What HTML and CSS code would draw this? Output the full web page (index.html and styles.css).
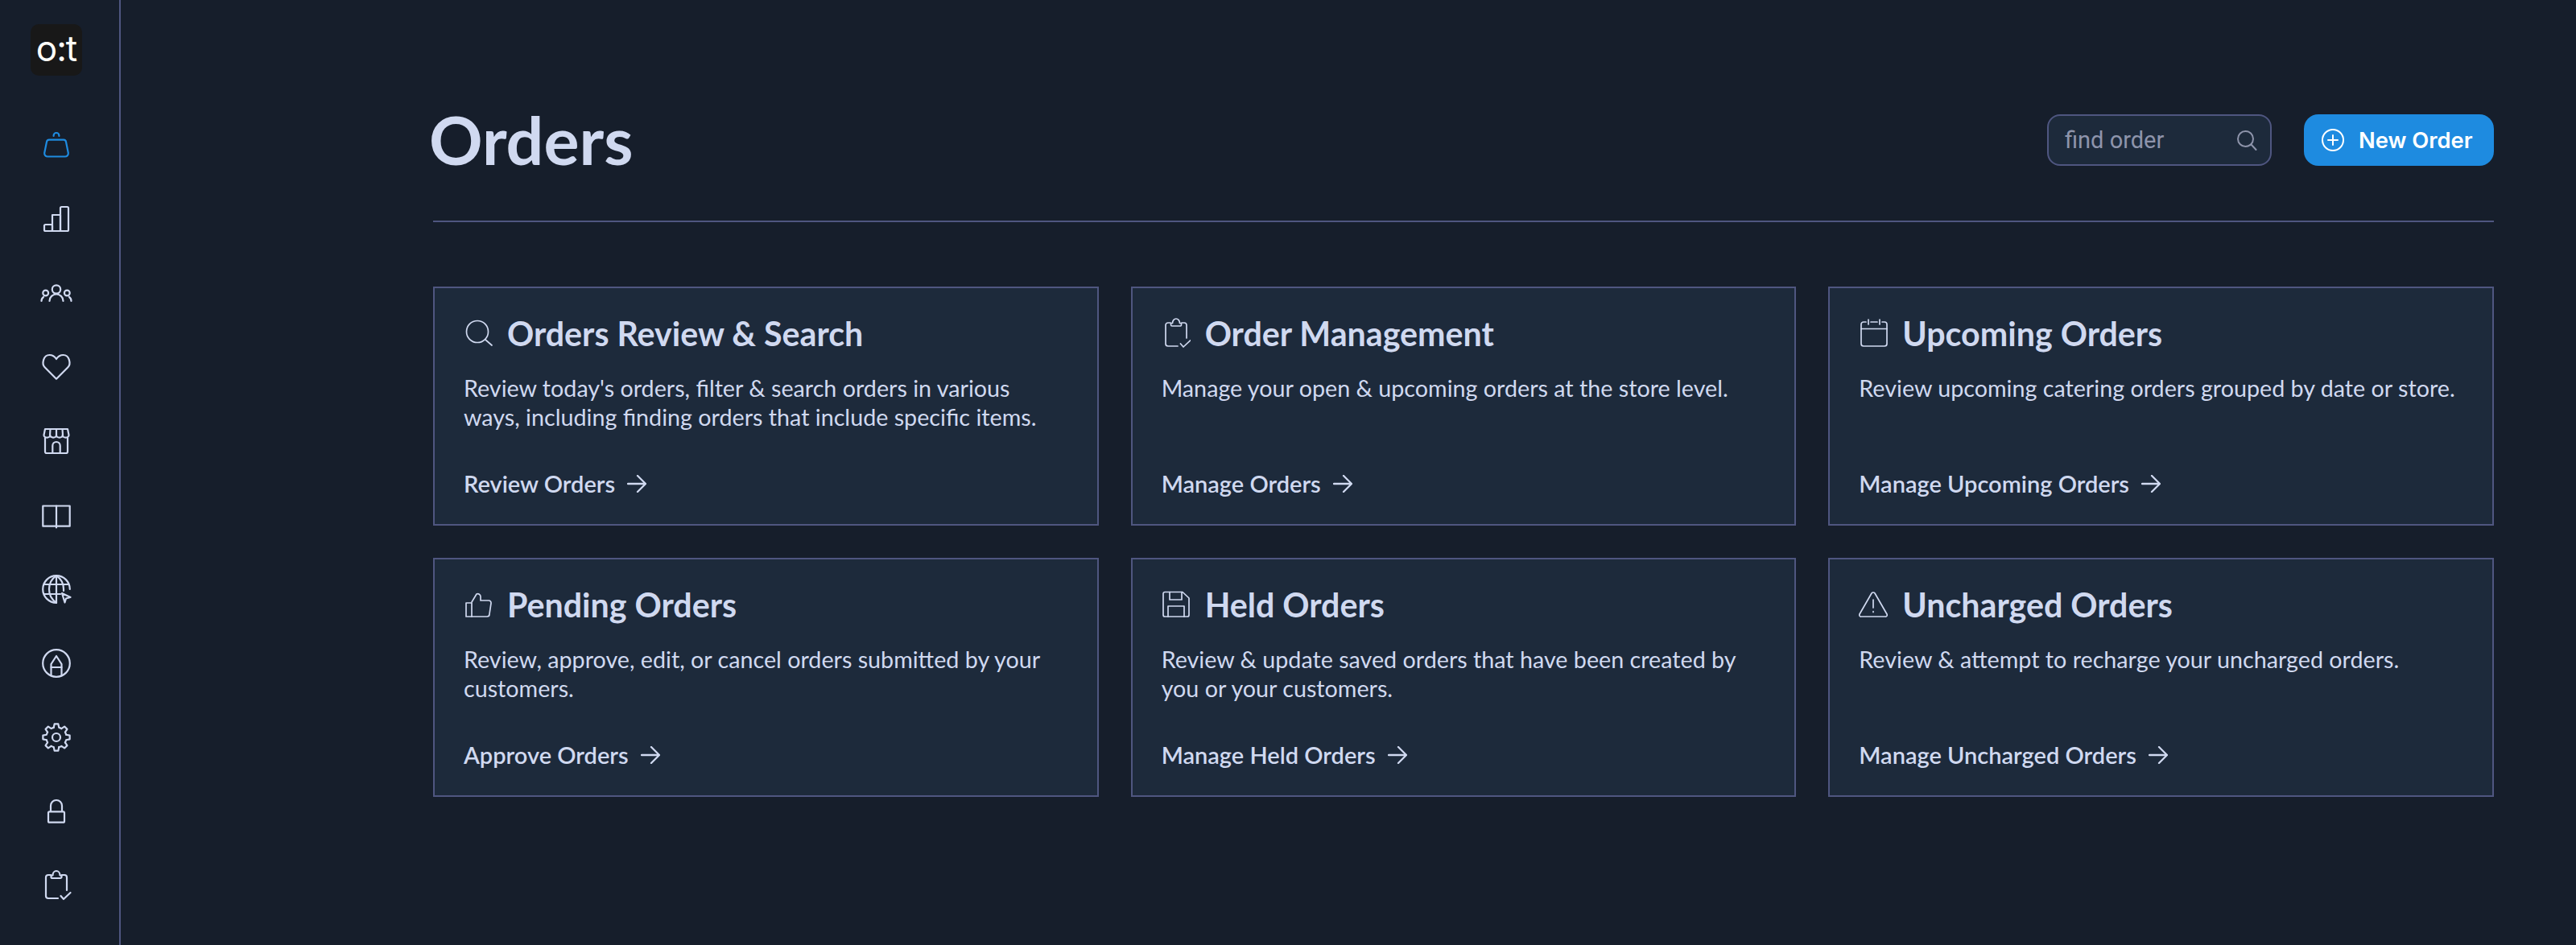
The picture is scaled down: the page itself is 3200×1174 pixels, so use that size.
FILE: index.html
```html
<!DOCTYPE html>
<html lang="en">
<head>
<meta charset="utf-8">
<title>Orders</title>
<link rel="stylesheet" href="styles.css">
</head>
<body>
<div class="app">
  <aside class="sidebar">
    <div class="logo">o:t</div>
    <nav class="nav">
      <a class="nav-item active"><svg class="nav-icon" viewBox="0 0 40 40"><path d="M11 13.7H29a3 3 0 0 1 3 2.6L34.8 30a4 4 0 0 1-4 4.5H9.2a4 4 0 0 1-4-4.5L8 16.3a3 3 0 0 1 3-2.6Z"/><path d="M16.6 9v-.6a3.4 3.4 0 0 1 6.8 0V9"/></svg></a>
      <a class="nav-item"><svg class="nav-icon" viewBox="0 0 40 40"><rect x="25" y="5" width="10" height="30" rx="1.5"/><rect x="15" y="15" width="10" height="20"/><rect x="5" y="27" width="10" height="8" rx="1.5"/></svg></a>
      <a class="nav-item"><svg class="nav-icon" viewBox="0 0 40 40"><circle cx="20" cy="15.5" r="5.2"/><path d="M11.5 30c0-5 4-8.5 8.5-8.5s8.5 3.500 8.500 8.500"/><circle cx="6.700" cy="20" r="3.400"/><path d="M1.500 30c0-2 .8-3.800 2.500-5"/><circle cx="33.300" cy="20" r="3.400"/><path d="M38.500 30c0-2-.8-3.800-2.500-5"/></svg></a>
      <a class="nav-item"><svg class="nav-icon" viewBox="0 0 40 40"><path d="M20 34.700 5.600 20.300C1.600 16.300 3.600 5 11.500 5 15 5 18 7 20 10c2-3 5-5 8.500-5 7.900 0 9.900 11.300 5.900 15.300Z"/></svg></a>
      <a class="nav-item"><svg class="nav-icon" viewBox="0 0 40 40"><path d="M6 16V33a2 2 0 0 0 2 2H32a2 2 0 0 0 2-2V16"/><path d="M6 5H34L35.500 12.500a3.750 3 0 0 1-7.750 0 3.750 3 0 0 1-7.750 0 3.750 3 0 0 1-7.750 0 3.750 3 0 0 1-7.750 0Z"/><path d="M12.500 5 12 12.500M20 5V12.500M27.500 5 28 12.500"/><path d="M15.300 35V25.700a4.700 4.700 0 0 1 9.400 0V35"/></svg></a>
      <a class="nav-item"><svg class="nav-icon" viewBox="0 0 40 40"><path d="M3.300 8.500H36.700V33.700H3.300Z"/><path d="M20 8.500V35.500"/></svg></a>
      <a class="nav-item"><svg class="nav-icon" viewBox="0 0 40 40"><path d="M36.800 20A16.800 16.800 0 1 0 20 36.800"/><path d="M20 3.200C13 8 11 14 11 20s2 12 9 16.800"/><path d="M20 3.200C27 8 29 14 29 20v2"/><path d="M20 3.200V36.800"/><path d="M5 14H35M5 26H25"/><path d="M27 25 37.500 30 32 31.500 30.500 36.500Z"/></svg></a>
      <a class="nav-item"><svg class="nav-icon" viewBox="0 0 40 40"><circle cx="20" cy="20" r="16.800"/><path d="M13.500 35V21L20 11 26.500 21V35"/><path d="M13.500 25H26.500"/></svg></a>
      <a class="nav-item"><svg class="nav-icon" viewBox="0 0 40 40"><path id="cog" d="M16.740 7.830 17.660 3.360H22.340L23.260 7.830A12.600 12.600 0 0 1 26.300 9.090"/><use href="#cog" transform="rotate(45 20 20)"/><use href="#cog" transform="rotate(90 20 20)"/><use href="#cog" transform="rotate(135 20 20)"/><use href="#cog" transform="rotate(180 20 20)"/><use href="#cog" transform="rotate(225 20 20)"/><use href="#cog" transform="rotate(270 20 20)"/><use href="#cog" transform="rotate(315 20 20)"/><circle cx="20" cy="20" r="5"/></svg></a>
      <a class="nav-item"><svg class="nav-icon" viewBox="0 0 40 40"><rect x="10" y="20.300" width="20" height="13.400" rx="1.500"/><path d="M13 20V13a7 7 0 0 1 14 0V20"/></svg></a>
      <a class="nav-item"><svg class="nav-icon" viewBox="0 0 40 40"><path d="M13 7H10a3 3 0 0 0-3 3V33a3 3 0 0 0 3 3H22"/><path d="M27 7H30a3 3 0 0 1 3 3V26"/><path d="M13.500 7.500V9.500A1.500 1.500 0 0 0 15 11H25a1.500 1.500 0 0 0 1.500-1.500V7.500H24.500a4.500 5.500 0 0 0-9 0Z"/><path d="M25.500 33 29 37 37.500 29"/></svg></a>
    </nav>
  </aside>

  <main class="main">
    <header class="page-header">
      <h1 class="page-title">Orders</h1>
      <div class="actions">
        <label class="search">
          <input class="search-input" type="text" placeholder="find order">
          <svg class="search-icon" viewBox="0 0 26 26"><circle cx="11.500" cy="11.500" r="9.500"/><path d="M18.500 18.500 24.500 25"/></svg>
        </label>
        <button class="new-order" type="button">
          <svg class="plus-icon" viewBox="0 0 28 28"><circle cx="14" cy="14" r="13"/><path d="M14 8V20M8 14H20"/></svg>
          New Order
        </button>
      </div>
    </header>

    <section class="cards">
      <article class="card">
        <h2 class="card-title"><svg class="card-icon" viewBox="0 0 36 36"><circle cx="17" cy="16" r="13.500"/><path d="M27 26 35 33"/></svg>Orders Review &amp; Search</h2>
        <p class="card-text">Review today's orders, filter &amp; search orders in various ways, including finding orders that include specific items.</p>
        <a class="card-link">Review Orders <svg class="arrow" viewBox="0 0 24 22"><path d="M1 11H23M13 1 23 11 13 21"/></svg></a>
      </article>
      <article class="card">
        <h2 class="card-title"><svg class="card-icon card-icon-tall" viewBox="2 1 36 38"><path d="M13 7H10a3 3 0 0 0-3 3V33a3 3 0 0 0 3 3H22"/><path d="M27 7H30a3 3 0 0 1 3 3V26"/><path d="M13.500 7.500V9.500A1.500 1.500 0 0 0 15 11H25a1.500 1.500 0 0 0 1.500-1.500V7.500H24.500a4.500 5.500 0 0 0-9 0Z"/><path d="M25.500 33 29 37 37.500 29"/></svg>Order Management</h2>
        <p class="card-text">Manage your open &amp; upcoming orders at the store level.</p>
        <a class="card-link">Manage Orders <svg class="arrow" viewBox="0 0 24 22"><path d="M1 11H23M13 1 23 11 13 21"/></svg></a>
      </article>
      <article class="card">
        <h2 class="card-title"><svg class="card-icon" viewBox="-2 0 36 36"><path d="M7 4H4a3 3 0 0 0-3 3V31a3 3 0 0 0 3 3H30a3 3 0 0 0 3-3V7a3 3 0 0 0-3-3H27"/><path d="M13 4H21M10 1V7M24 1V7M1 12.500H33"/></svg>Upcoming Orders</h2>
        <p class="card-text">Review upcoming catering orders grouped by date or store.</p>
        <a class="card-link">Manage Upcoming Orders <svg class="arrow" viewBox="0 0 24 22"><path d="M1 11H23M13 1 23 11 13 21"/></svg></a>
      </article>
      <article class="card">
        <h2 class="card-title"><svg class="card-icon" viewBox="0 0 36 36"><path d="M3 16H10V33H3Z"/><path d="M10 15 16 5a3.500 3.500 0 0 1 5 3V13H31a3 3 0 0 1 3 3.500L32 30a3 3 0 0 1-3 3H10"/></svg>Pending Orders</h2>
        <p class="card-text">Review, approve, edit, or cancel orders submitted by your customers.</p>
        <a class="card-link">Approve Orders <svg class="arrow" viewBox="0 0 24 22"><path d="M1 11H23M13 1 23 11 13 21"/></svg></a>
      </article>
      <article class="card">
        <h2 class="card-title"><svg class="card-icon" viewBox="0 0 36 36"><path d="M4 2.500H26L34 10V31a2 2 0 0 1-2 2H4a2 2 0 0 1-2-2V4.500a2 2 0 0 1 2-2Z"/><path d="M10 2.500V12H25V2.500"/><path d="M8 33V20H28V33"/></svg>Held Orders</h2>
        <p class="card-text">Review &amp; update saved orders that have been created by you or your customers.</p>
        <a class="card-link">Manage Held Orders <svg class="arrow" viewBox="0 0 24 22"><path d="M1 11H23M13 1 23 11 13 21"/></svg></a>
      </article>
      <article class="card">
        <h2 class="card-title"><svg class="card-icon" viewBox="0 0 36 36"><path d="M16 4a2.500 2.500 0 0 1 4 0L35 30a2 2 0 0 1-2 3H3a2 2 0 0 1-2-3Z"/><path d="M18 12V22M18 26.500V27.500"/></svg>Uncharged Orders</h2>
        <p class="card-text">Review &amp; attempt to recharge your uncharged orders.</p>
        <a class="card-link">Manage Uncharged Orders <svg class="arrow" viewBox="0 0 24 22"><path d="M1 11H23M13 1 23 11 13 21"/></svg></a>
      </article>
    </section>
  </main>
</div>
</body>
</html>
```

FILE: styles.css
```css
* { box-sizing: border-box; }

html, body {
  margin: 0;
  height: 100%;
  background: #161e2b;
}

body {
  font-family: "Lato", "Liberation Sans", sans-serif;
  color: #d0d9f0;
  overflow: hidden;
}

.app {
  display: flex;
  height: 1174px;
}

.sidebar {
  flex: 0 0 150px;
  border-right: 2px solid #4f5680;
  display: flex;
  flex-direction: column;
  align-items: center;
  padding: 30px 8px 0 0;
}

.logo {
  width: 64px;
  height: 64px;
  border-radius: 10px;
  background: #181818;
  color: #fffdf8;
  font-family: "Inter", sans-serif;
  font-size: 44px;
  line-height: 60px;
  letter-spacing: -1px;
  text-align: center;
}

.nav {
  margin-top: 66px;
  display: flex;
  flex-direction: column;
  gap: 52px;
}

.nav-item {
  display: block;
  width: 40px;
  height: 40px;
  color: #d0d9f0;
}

.nav-item.active { color: #1e8be0; }

.nav-icon {
  display: block;
  width: 40px;
  height: 40px;
  fill: none;
  stroke: currentColor;
  stroke-width: 2.200;
  stroke-linecap: round;
  stroke-linejoin: round;
}

.main {
  flex: 1;
  padding: 142px 102px 0 388px;
}

.page-header {
  display: flex;
  align-items: center;
  justify-content: space-between;
  height: 134px;
  padding-bottom: 68px;
  border-bottom: 2px solid #4f5680;
}

.page-title {
  margin: 0 0 0 -5px;
  font-size: 82.500px;
  line-height: 64px;
  font-weight: 700;
  color: #d0d9f0;
}

.actions {
  display: flex;
  gap: 40px;
}

.search {
  display: flex;
  align-items: center;
  width: 279px;
  height: 64px;
  padding: 0 16px 0 20px;
  border: 2px solid #4f5680;
  border-radius: 16px;
  background: #1d2a3b;
}

.search-input {
  flex: 1;
  min-width: 0;
  padding: 0;
  border: 0;
  outline: 0;
  background: transparent;
  font-family: "Roboto", sans-serif;
  font-size: 29px;
  color: #8e94ab;
}

.search-input::placeholder {
  color: #8e94ab;
  opacity: 1;
}

.search-icon {
  flex: none;
  width: 26px;
  height: 26px;
  fill: none;
  stroke: #8e94ab;
  stroke-width: 2;
  stroke-linecap: round;
}

.new-order {
  display: flex;
  align-items: center;
  gap: 18px;
  width: 236px;
  height: 64px;
  padding: 0 0 0 22px;
  border: 0;
  border-radius: 18px;
  background: #1e8be0;
  color: #fff;
  font-family: "Inter", sans-serif;
  font-size: 27.300px;
  font-weight: 600;
}

.plus-icon {
  flex: none;
  width: 28px;
  height: 28px;
  fill: none;
  stroke: #fff;
  stroke-width: 2;
  stroke-linecap: round;
}

.cards {
  margin-top: 80px;
  display: grid;
  grid-template-columns: repeat(3, 1fr);
  grid-auto-rows: 297px;
  gap: 40px;
}

.card {
  display: flex;
  flex-direction: column;
  padding: 32px 36px;
  border: 2px solid #4f5680;
  background: #1d2a3b;
}

.card-title {
  display: flex;
  align-items: center;
  gap: 18px;
  margin: 0;
  height: 48px;
  font-size: 41.200px;
  line-height: 48px;
  font-weight: 700;
  color: #d0d9f0;
}

.card-icon {
  flex: none;
  width: 36px;
  height: 36px;
  fill: none;
  stroke: currentColor;
  stroke-width: 1.700;
  stroke-linecap: round;
  stroke-linejoin: round;
}

.card-icon-tall {
  height: 38px;
}

.card-text {
  margin: 26px 0 0;
  font-size: 28.700px;
  line-height: 36px;
  font-weight: 400;
  color: #d0d9f0;
}

.card-link {
  display: flex;
  align-items: center;
  gap: 15px;
  margin-top: auto;
  font-size: 29px;
  line-height: 36px;
  font-weight: 600;
  color: #d0d9f0;
}

.arrow {
  flex: none;
  width: 24px;
  height: 22px;
  fill: none;
  stroke: currentColor;
  stroke-width: 2.300;
  stroke-linecap: round;
  stroke-linejoin: round;
}
```
